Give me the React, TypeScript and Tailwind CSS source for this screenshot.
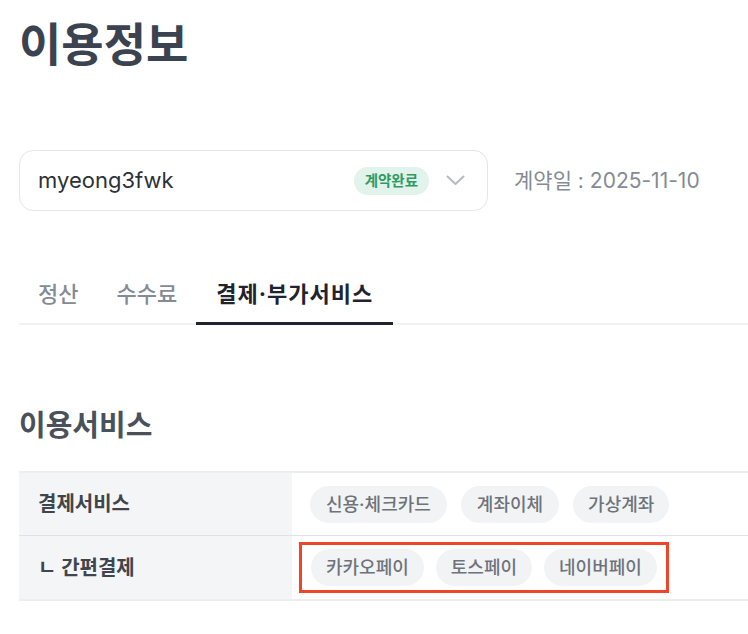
import React from "react";

const font = { fontFamily: "Inter, 'Noto Sans CJK KR', 'Noto Sans', sans-serif" };

const tabs = ["정산", "수수료", "결제·부가서비스"];

const Chip: React.FC<{ label: string; wide?: boolean }> = ({ label, wide }) => (
  <span
    className={
      wide
        ? "h-[37px] px-[16px] flex items-center rounded-full bg-[#f2f3f5] text-[18px] text-[#6e737b] font-medium whitespace-nowrap"
        : "h-[37px] px-[15px] flex items-center rounded-full bg-[#f2f3f5] text-[18px] text-[#6e737b] font-medium whitespace-nowrap"
    }
  >
    {label}
  </span>
);

const App: React.FC = () => {
  const active = 2;

  return (
    <div className="min-h-screen bg-white pl-[19px] overflow-hidden" style={font}>
      <h1 className="pt-[14px] text-[46px] leading-[60px] font-bold text-[#3b4350]">이용정보</h1>

      <div className="mt-[76px] flex items-center">
        <div className="w-[469px] h-[61px] rounded-[14px] border border-[#e3e5e8] flex items-center pl-[18px] pr-[22px]">
          <span className="flex-1 text-[22px] text-[#2d3138]">myeong3fwk</span>
          <span className="h-[28px] px-[11px] flex items-center rounded-full bg-[#e1f3ea] text-[14.5px] font-bold text-[#2f9a63]">계약완료</span>
          <svg className="ml-[17px]" width="19" height="11" viewBox="0 0 19 11" fill="none">
            <path d="M1.5 1.5 L9.5 9 L17.5 1.5" stroke="#b6bbc2" strokeWidth="2" strokeLinecap="round" strokeLinejoin="round" />
          </svg>
        </div>
        <span className="ml-[26px] text-[21px] text-[#868b93]">계약일 : 2025-11-10</span>
      </div>

      <div className="mt-[64px] flex border-b-[2px] border-[#f0f1f3] w-[800px]">
        {tabs.map((t, i) => (
          <div
            key={t}
            className={
              i === active
                ? "px-[20px] pt-[4px] pb-[13px] text-[22px] leading-[30px] tracking-[1px] font-bold text-[#1f2430] border-b-[3px] border-[#1f2430] -mb-[2px]"
                : "px-[19px] pt-[4px] pb-[13px] text-[22px] leading-[30px] font-medium text-[#858b94] border-b-[3px] border-transparent -mb-[2px]"
            }
          >
            {t}
          </div>
        ))}
      </div>

      <h2 className="mt-[80px] text-[29px] leading-[42px] font-bold text-[#4a515b]">이용서비스</h2>

      <div className="mt-[24px] w-[800px] border-t-[2px] border-[#eceef0] border-b-[2px]">
        <div className="flex h-[63px] border-b border-[#dfe2e6]">
          <div className="w-[273px] bg-[#f4f5f7] flex items-center pl-[19px] text-[20px] font-bold text-[#40454d]">결제서비스</div>
          <div className="flex items-center gap-[14px] pl-[18px]">
            <Chip label="신용·체크카드" wide />
            <Chip label="계좌이체" wide />
            <Chip label="가상계좌" />
          </div>
        </div>
        <div className="flex h-[63px]">
          <div className="w-[273px] bg-[#f4f5f7] flex items-center pl-[19px] text-[20px] font-bold text-[#40454d]">ㄴ 간편결제</div>
          <div className="flex items-center pl-[7px]">
            <div className="flex items-center gap-[12px] border-[3px] border-[#ee4427] px-[9px] py-[4px]">
              <Chip label="카카오페이" />
              <Chip label="토스페이" />
              <Chip label="네이버페이" />
            </div>
          </div>
        </div>
      </div>
    </div>
  );
};

export default App;
